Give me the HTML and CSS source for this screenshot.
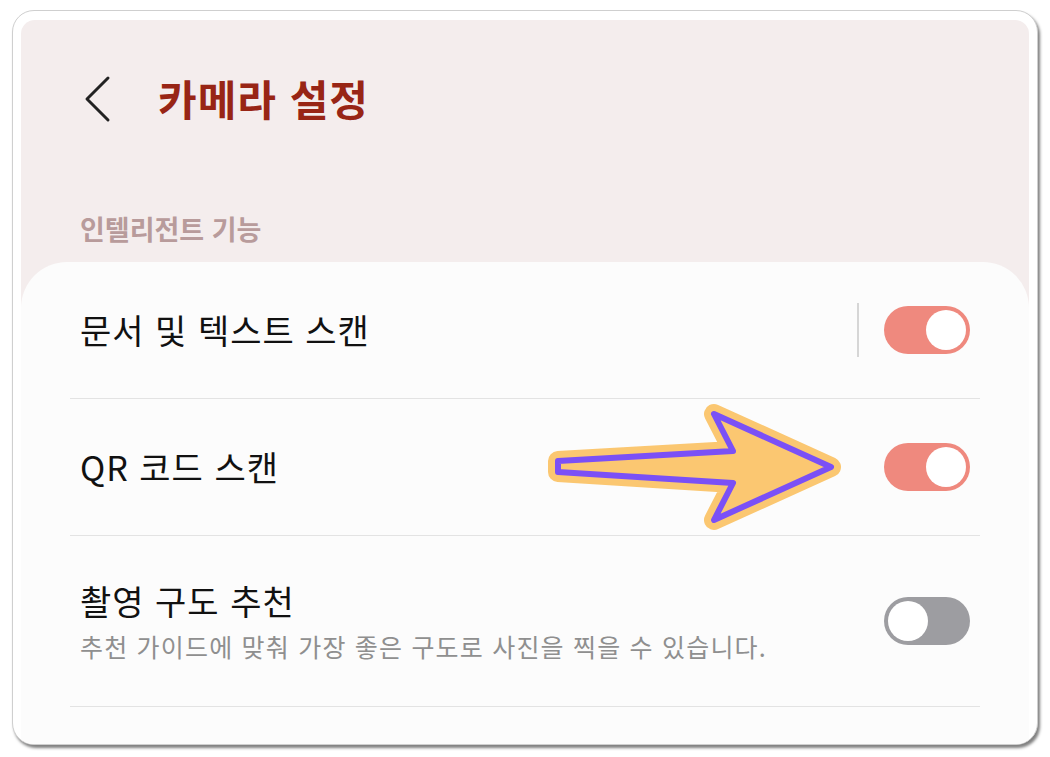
FILE: index.html
```html
<!DOCTYPE html>
<html lang="ko">
<head>
  <meta charset="utf-8">
  <title>카메라 설정</title>
  <link rel="stylesheet" href="styles.css">
</head>
<body>

  <div class="frame">
    <div class="screen">

      <div class="header">
        <svg class="back" width="30" height="50" viewBox="0 0 30 50">
          <path d="M25 4 L4 25 L25 46" fill="none" stroke="#222" stroke-width="3" stroke-linecap="round" stroke-linejoin="round"/>
        </svg>
        <h1 class="title">카메라 설정</h1>
      </div>

      <div class="section-label">인텔리전트 기능</div>

      <div class="card">
        <div class="row">
          <div class="row-text">
            <div class="row-title">문서 및 텍스트 스캔</div>
          </div>
          <div class="v-divider"></div>
          <div class="toggle on"><div class="knob"></div></div>
        </div>

        <div class="row">
          <div class="row-text">
            <div class="row-title">QR 코드 스캔</div>
          </div>
          <div class="toggle on"><div class="knob"></div></div>
        </div>

        <div class="row tall">
          <div class="row-text">
            <div class="row-title">촬영 구도 추천</div>
            <div class="row-sub">추천 가이드에 맞춰 가장 좋은 구도로 사진을 찍을 수 있습니다.</div>
          </div>
          <div class="toggle"><div class="knob"></div></div>
        </div>
      </div>

    </div>
  </div>

  <!-- annotation arrow -->
  <svg class="pointer" width="1050" height="757" viewBox="0 0 1050 757">
    <path d="M558 461 L733 451 L714 414 L831 467 L714 520 L733 483 L558 472 Z"
          fill="#fbc771" stroke="#fbc771" stroke-width="20" stroke-linejoin="round"/>
    <path d="M558 461 L733 451 L714 414 L831 467 L714 520 L733 483 L558 472 Z"
          fill="#fbc771" stroke="#7b50f6" stroke-width="6" stroke-linejoin="round"/>
  </svg>

</body>
</html>
```

FILE: styles.css
```css
body {
  margin: 0;
  background: #ffffff;
  font-family: "Noto Sans CJK KR", "Noto Sans", sans-serif;
  position: relative;
  height: 757px;
  overflow: hidden;
}

.frame {
  box-sizing: border-box;
  margin: 10px 0 0 12px;
  width: 1026px;
  height: 735px;
  padding: 9px 8px 0;
  background: #ffffff;
  border: 1px solid #cfcfcf;
  border-radius: 22px;
  box-shadow: 2px 3px 3px rgba(0, 0, 0, 0.5);
  overflow: hidden;
}

.screen {
  height: 100%;
  background: #f4eded;
  border-radius: 14px 14px 0 0;
  display: flex;
  flex-direction: column;
}

/* header */
.header {
  display: flex;
  align-items: center;
  height: 56px;
  margin-top: 50px;
  padding-left: 62px;
}

.back {
  display: block;
  margin-top: 2px;
}

.title {
  margin: 0 0 0 45px;
  font-size: 42px;
  font-weight: 700;
  color: #982515;
  letter-spacing: 1px;
  line-height: 56px;
}

.section-label {
  margin-top: 88px;
  padding-left: 59px;
  font-size: 27px;
  font-weight: 700;
  line-height: 30px;
  color: #b89b9b;
}

/* card */
.card {
  flex: 1;
  margin-top: 18px;
  background: #fcfcfc;
  border-radius: 46px 46px 0 0;
  padding: 0 49px;
}

.row {
  display: flex;
  align-items: center;
  height: 136px;
  padding: 0 10px;
  border-bottom: 1px solid #e3e3e3;
}

.row.tall {
  height: 170px;
}

.row-text {
  flex: 1;
}

.row-title {
  font-size: 34px;
  line-height: 44px;
  color: #111111;
  letter-spacing: 1px;
}

.row-sub {
  margin-top: 6px;
  font-size: 25px;
  line-height: 34px;
  color: #8f8f8f;
  letter-spacing: 1.2px;
}

.v-divider {
  width: 2px;
  height: 54px;
  background: #d6d6d6;
  margin-right: 25px;
}

/* switches */
.toggle {
  box-sizing: border-box;
  width: 86px;
  height: 48px;
  border-radius: 24px;
  background: #9d9da1;
  padding: 4px;
  display: flex;
  justify-content: flex-start;
}

.toggle.on {
  background: #ef897e;
  justify-content: flex-end;
}

.knob {
  width: 40px;
  height: 40px;
  border-radius: 50%;
  background: #ffffff;
}

.pointer {
  position: absolute;
  left: 0;
  top: 0;
  pointer-events: none;
}
```
